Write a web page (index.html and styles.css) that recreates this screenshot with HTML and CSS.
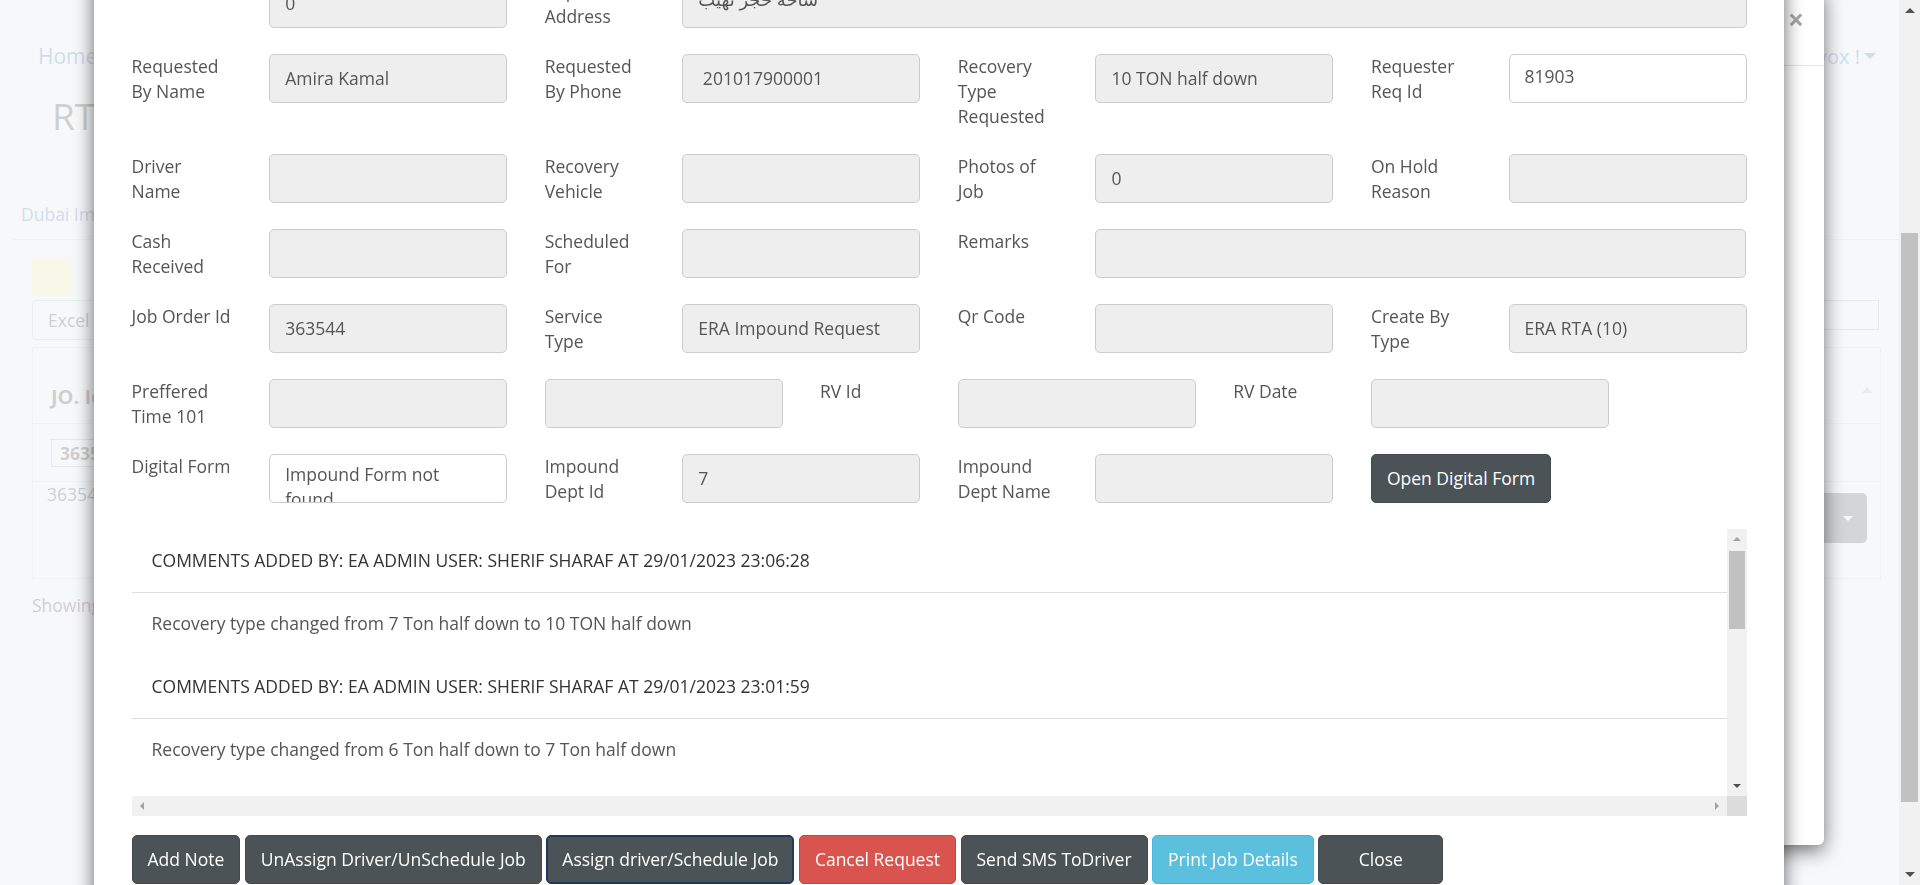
FILE: index.html
```html
<!DOCTYPE html>
<html lang="en">
<head>
<meta charset="utf-8">
<title>RTA Impound Requests</title>
<link rel="stylesheet" href="styles.css">
</head>
<body>
<div class="app">
  <header class="bg-top">
    <a class="bg-crumb">Home</a>
    <span class="bg-user">Welcome Admin Trivox ! <span class="bg-caret"></span></span>
  </header>
  <h1 class="bg-title">RTA Impound Requests</h1>
  <nav class="bg-tabs"><a class="bg-tab">Dubai Impound Yard</a></nav>
  <section class="bg-panel">
    <div class="bg-legend"><span class="bg-swatch"></span><span class="bg-legend-text">Job in progress</span></div>
    <div class="bg-tools">
      <span class="bg-btn">Excel</span>
      <span class="bg-search">Search: <span class="bg-search-box"></span></span>
    </div>
    <table class="bg-table">
      <thead>
        <tr class="bg-head"><th>JO. Id</th><th class="bg-sort-cell"><span class="bg-sort"></span></th></tr>
        <tr class="bg-filter"><td><span class="bg-filter-box">3635</span></td><td></td></tr>
      </thead>
      <tbody>
        <tr class="bg-row"><td>363544</td><td class="bg-act"><span class="bg-drop"><span class="bg-drop-caret"></span></span></td></tr>
      </tbody>
    </table>
    <div class="bg-info">Showing 1 to 1 of 1 entries</div>
  </section>
</div>

<div class="backdrop"></div>

<div class="back-modal">
  <div class="bm-header"><span class="bm-close">&times;</span></div>
</div>

<div class="modal" id="jobModal">
  <div class="modal-dialog">
    <div class="modal-content">
      <div class="modal-header">
        <h4 class="modal-title">Job Order Details</h4>
        <span class="modal-close">&times;</span>
      </div>
      <div class="modal-body">
        <div class="frow">
          <label class="lbl s1">Job Status</label>
          <div class="s2"><input class="ctl" readonly value="Impounded"></div>
          <label class="lbl s1">Plate Number</label>
          <div class="s2"><input class="ctl" readonly value="D 48213"></div>
          <label class="lbl s1">Vehicle Make</label>
          <div class="s2"><input class="ctl" readonly value="Toyota"></div>
          <label class="lbl s1">Vehicle Model</label>
          <div class="s2"><input class="ctl" readonly value="Camry"></div>
        </div>
        <div class="frow">
          <label class="lbl s1">Request Date</label>
          <div class="s2"><input class="ctl" readonly value="29/01/2023 22:41"></div>
          <label class="lbl s1">Pickup Location Address</label>
          <div class="s2"><input class="ctl" readonly value="Al Quoz"></div>
          <label class="lbl s1">Plate Code</label>
          <div class="s2"><input class="ctl" readonly value="D"></div>
          <label class="lbl s1">Plate Source</label>
          <div class="s2"><input class="ctl" readonly value="Dubai"></div>
        </div>
        <div class="frow" id="firstVisibleRow">
          <label class="lbl s1">Amount</label>
          <div class="s2"><input class="ctl" readonly value="0"></div>
          <label class="lbl s1">Impound Address</label>
          <div class="s8"><input class="ctl ctl-ar" readonly value="ساحة حجز نهيب"></div>
        </div>
        <div class="frow">
          <label class="lbl s1">Requested By Name</label>
          <div class="s2"><input class="ctl" readonly value="Amira Kamal"></div>
          <label class="lbl s1">Requested By Phone</label>
          <div class="s2"><input class="ctl" readonly value=" 201017900001"></div>
          <label class="lbl s1">Recovery Type Requested</label>
          <div class="s2"><input class="ctl" readonly value="10 TON half down"></div>
          <label class="lbl s1">Requester Req Id</label>
          <div class="s2"><input class="ctl ctl-num" value="81903"></div>
        </div>
        <div class="frow">
          <label class="lbl s1">Driver Name</label>
          <div class="s2"><input class="ctl" readonly value=""></div>
          <label class="lbl s1">Recovery Vehicle</label>
          <div class="s2"><input class="ctl" readonly value=""></div>
          <label class="lbl s1">Photos of Job</label>
          <div class="s2"><input class="ctl" readonly value="0"></div>
          <label class="lbl s1">On Hold Reason</label>
          <div class="s2"><input class="ctl" readonly value=""></div>
        </div>
        <div class="frow">
          <label class="lbl s1">Cash Received</label>
          <div class="s2"><input class="ctl" readonly value=""></div>
          <label class="lbl s1">Scheduled For</label>
          <div class="s2"><input class="ctl" readonly value=""></div>
          <label class="lbl s1">Remarks</label>
          <div class="s5"><input class="ctl" readonly value=""></div>
        </div>
        <div class="frow">
          <label class="lbl s1">Job Order Id</label>
          <div class="s2"><input class="ctl" readonly value="363544"></div>
          <label class="lbl s1">Service Type</label>
          <div class="s2"><input class="ctl" readonly value="ERA Impound Request"></div>
          <label class="lbl s1">Qr Code</label>
          <div class="s2"><input class="ctl" readonly value=""></div>
          <label class="lbl s1">Create By Type</label>
          <div class="s2"><input class="ctl" readonly value="ERA RTA (10)"></div>
        </div>
        <div class="frow">
          <label class="lbl s1">Preffered Time 101</label>
          <div class="s2"><input class="ctl" readonly value=""></div>
          <div class="s2"><input class="ctl" readonly value=""></div>
          <label class="lbl s1">RV Id</label>
          <div class="s2"><input class="ctl" readonly value=""></div>
          <label class="lbl s1">RV Date</label>
          <div class="s2"><input class="ctl" readonly value=""></div>
        </div>
        <div class="frow">
          <label class="lbl s1">Digital Form</label>
          <div class="s2"><textarea class="ctl ctl-area">Impound Form not found</textarea></div>
          <label class="lbl s1">Impound Dept Id</label>
          <div class="s2"><input class="ctl" readonly value="7"></div>
          <label class="lbl s1">Impound Dept Name</label>
          <div class="s2"><input class="ctl" readonly value=""></div>
          <div class="s2"><button class="btn btn-dark">Open Digital Form</button></div>
        </div>

        <div class="cmt-wrap">
          <div class="comments">
            <div class="cmt-view">
              <div class="cmt">
                <div class="cmt-head">COMMENTS ADDED BY: EA ADMIN USER: SHERIF SHARAF AT 29/01/2023 23:06:28</div>
                <div class="cmt-body">Recovery type changed from 7 Ton half down to 10 TON half down</div>
              </div>
              <div class="cmt">
                <div class="cmt-head">COMMENTS ADDED BY: EA ADMIN USER: SHERIF SHARAF AT 29/01/2023 23:01:59</div>
                <div class="cmt-body">Recovery type changed from 6 Ton half down to 7 Ton half down</div>
              </div>
              <div class="cmt">
                <div class="cmt-head">COMMENTS ADDED BY: EA ADMIN USER: SHERIF SHARAF AT 29/01/2023 22:58:41</div>
                <div class="cmt-body">Recovery type changed from 3 Ton flat bed to 6 Ton half down</div>
              </div>
              <div class="cmt">
                <div class="cmt-head">COMMENTS ADDED BY: EA ADMIN USER: SHERIF SHARAF AT 29/01/2023 22:55:12</div>
                <div class="cmt-body">Service type changed to ERA Impound Request</div>
              </div>
              <div class="cmt">
                <div class="cmt-head">COMMENTS ADDED BY: ERA RTA AT 29/01/2023 22:50:37</div>
                <div class="cmt-body">Impound request received from ERA RTA</div>
              </div>
              <div class="cmt">
                <div class="cmt-head">COMMENTS ADDED BY: ERA RTA AT 29/01/2023 22:49:03</div>
                <div class="cmt-body">Job order created</div>
              </div>
            </div>
            <div class="vbar">
              <span class="sb-btn"><span class="tri tri-up tri-off"></span></span>
              <div class="sb-track"><span class="sb-thumb-v" style="margin-top:2px;height:78px"></span></div>
              <span class="sb-btn"><span class="tri tri-down"></span></span>
            </div>
            <div class="hbar">
              <span class="sb-btn"><span class="tri tri-left tri-off"></span></span>
              <div class="sb-track"></div>
              <span class="sb-btn"><span class="tri tri-right tri-off"></span></span>
            </div>
            <div class="sb-corner"></div>
          </div>
        </div>

        <div class="actions">
          <button class="btn btn-dark">Add Note</button>
          <button class="btn btn-dark">UnAssign Driver/UnSchedule Job</button>
          <button class="btn btn-dark btn-focus">Assign driver/Schedule Job</button>
          <button class="btn btn-red">Cancel Request</button>
          <button class="btn btn-dark">Send SMS ToDriver</button>
          <button class="btn btn-info">Print Job Details</button>
          <button class="btn btn-dark btn-close">Close</button>
        </div>
      </div>
      <div class="modal-footer"></div>
    </div>
  </div>
</div>

<div class="page-bar">
  <span class="sb-btn sb-btn-page"><span class="tri tri-up"></span></span>
  <div class="sb-track"><span class="sb-thumb-v" style="margin-top:212px;height:569px"></span></div>
  <span class="sb-btn sb-btn-page"><span class="tri tri-down"></span></span>
</div>
<script src="app.js"></script>
</body>
</html>
```

FILE: styles.css
```css
* { box-sizing: border-box; }
html, body { margin: 0; height: 100%; }
body {
  font-family: "Open Sans", "DejaVu Sans", sans-serif;
  font-size: 17.5px;
  line-height: 25px;
  color: #333;
  background: #fff;
  overflow: hidden;
}

/* ---------- background page ---------- */
.app { height: 885px; overflow: hidden; }
.bg-top {
  height: 90px;
  padding: 22px 44px 0 38px;
  display: flex;
  align-items: center;
  justify-content: space-between;
}
.bg-crumb { color: #337ab7; font-size: 21px; }
.bg-user { color: #337ab7; font-size: 20px; display: flex; align-items: center; gap: 4px; }
.bg-caret {
  width: 0; height: 0;
  border-left: 6px solid transparent;
  border-right: 6px solid transparent;
  border-top: 6px solid #337ab7;
}
.bg-title {
  margin: 4px 0 0;
  padding-left: 52px;
  font-size: 37px;
  line-height: 44px;
  font-weight: 400;
  color: #333;
}
.bg-tabs {
  margin: 52px 13px 0;
  border-bottom: 1px solid #ddd;
  height: 50px;
}
.bg-tab { display: inline-block; padding: 12px 8px; color: #337ab7; }
.bg-panel { padding: 19px 39px 0 32px; }
.bg-legend { display: flex; align-items: flex-start; gap: 28px; height: 37px; }
.bg-swatch { width: 39px; height: 37px; background: #ffffa0; }
.bg-tools {
  margin-top: 4px;
  display: flex;
  justify-content: space-between;
  align-items: flex-start;
}
.bg-btn {
  height: 40px;
  padding: 0 15px;
  line-height: 38px;
  border: 1px solid #ccc;
  border-radius: 5px;
  color: #333;
}
.bg-search { display: flex; align-items: center; gap: 8px; margin-right: 2px; }
.bg-search-box { width: 190px; height: 30px; border: 1px solid #aaa; }
.bg-table {
  margin-top: 7px;
  width: 100%;
  border-collapse: collapse;
  border: 1px solid #ddd;
}
.bg-table td, .bg-table th { text-align: left; padding: 0 18px; }
.bg-head { height: 76px; border-bottom: 1px solid #ddd; }
.bg-head th { font-size: 20px; font-weight: 700; color: #333; vertical-align: bottom; padding-bottom: 14px; }
.bg-sort-cell { text-align: right !important; vertical-align: middle !important; padding-right: 8px !important; padding-bottom: 0 !important; }
.bg-sort {
  display: inline-block;
  width: 0; height: 0;
  border-left: 5px solid transparent;
  border-right: 5px solid transparent;
  border-bottom: 6px solid #bbb;
}
.bg-filter { height: 58px; border-bottom: 1px solid #ddd; }
.bg-filter-box {
  display: inline-block;
  width: 160px; height: 28px;
  border: 1px solid #aaa;
  padding: 0 8px;
  font-weight: 700;
  line-height: 26px;
}
.bg-row { height: 97px; }
.bg-row td { vertical-align: top; padding-top: 0; padding-left: 14px; }
.bg-act { text-align: right !important; padding-right: 13px !important; padding-top: 11px !important; }
.bg-drop {
  display: inline-flex;
  align-items: center;
  justify-content: flex-end;
  width: 120px; height: 50px;
  padding-right: 14px;
  background: #4b5357;
  border-radius: 5px;
}
.bg-drop-caret {
  width: 0; height: 0;
  border-left: 5px solid transparent;
  border-right: 5px solid transparent;
  border-top: 5px solid #fff;
}
.bg-info { margin-top: 14px; color: #333; }

/* ---------- overlays ---------- */
.backdrop {
  position: fixed;
  inset: 0;
  background: rgba(245, 246, 249, 0.8);
  z-index: 10;
}
.back-modal {
  position: fixed;
  left: 134px;
  top: -12px;
  width: 1690px;
  height: 857px;
  background: #fff;
  border-radius: 6px;
  box-shadow: 0 6px 19px rgba(0, 0, 0, 0.55);
  z-index: 20;
}
.bm-header {
  height: 78px;
  border-bottom: 1px solid #e5e5e5;
  display: flex;
  justify-content: flex-end;
  padding: 18px 20px 0;
}
.bm-close { font-size: 28px; line-height: 26px; font-weight: 700; color: #a6a6a6; }

.modal {
  position: fixed;
  inset: 0;
  overflow-x: hidden;
  overflow-y: scroll;
  z-index: 30;
}
.modal-dialog { width: 1690px; margin: 37.5px 0 37.5px 94px; }
.modal-content {
  background: #fff;
  border-radius: 6px;
  box-shadow: 0 6px 19px rgba(0, 0, 0, 0.6);
}
.modal-header {
  padding: 18.75px;
  border-bottom: 1px solid #e5e5e5;
  display: flex;
  justify-content: space-between;
  align-items: center;
}
.modal-title { margin: 0; font-size: 22.5px; line-height: 31px; font-weight: 600; }
.modal-close { font-size: 28px; font-weight: 700; color: #aaa; }
.modal-body { padding: 18.75px; }
.modal-footer { height: 40px; border-top: 1px solid #e5e5e5; }

/* ---------- form grid ---------- */
.frow {
  display: grid;
  grid-template-columns: repeat(12, minmax(0, 1fr));
  align-items: start;
  margin-bottom: 25px;
}
.frow > * { padding: 0 18.75px; }
.s1 { grid-column: span 1; }
.s2 { grid-column: span 2; }
.s5 { grid-column: span 5; }
.s8 { grid-column: span 8; }
.lbl { color: #555; font-weight: 400; margin: 0; }
.ctl {
  display: block;
  width: 100%;
  height: 49px;
  margin: 0;
  padding: 0 15px;
  font: inherit;
  color: #555;
  background: #fff;
  border: 1px solid #ccc;
  border-radius: 5px;
  outline: none;
}
.ctl[readonly] { background: #eee; }
.ctl-num { padding-bottom: 4px; }
.ctl-ar { padding-bottom: 8px; font-size: 18px; }
.ctl-area {
  padding: 7.5px 15px;
  line-height: 25px;
  resize: none;
  overflow: hidden;
}

/* ---------- comments ---------- */
.cmt-wrap { padding: 0 18.75px; margin-bottom: 18.75px; }
.comments {
  height: 287px;
  display: grid;
  grid-template-columns: minmax(0, 1fr) 20px;
  grid-template-rows: 267px 20px;
}
.cmt-view { overflow: hidden; }
.cmt-head {
  padding: 19px 20px;
  border-bottom: 1px solid #ddd;
  color: #333;
  white-space: nowrap;
}
.cmt-body { padding: 18.5px 20px; color: #555; white-space: nowrap; }

/* scrollbar widgets */
.vbar, .hbar, .page-bar { background: #f1f1f1; display: flex; }
.vbar, .page-bar { flex-direction: column; }
.sb-btn {
  flex: 0 0 20px;
  width: 20px;
  height: 20px;
  display: flex;
  align-items: center;
  justify-content: center;
}
.sb-track { flex: 1; display: flex; flex-direction: column; }
.sb-thumb-v { display: block; margin-left: 2px; margin-right: 2px; background: #c1c1c1; }
.sb-corner { background: #dcdcdc; }
.tri { width: 0; height: 0; }
.tri-up { border-left: 4.5px solid transparent; border-right: 4.5px solid transparent; border-bottom: 4.5px solid #505050; }
.tri-down { border-left: 4.5px solid transparent; border-right: 4.5px solid transparent; border-top: 4.5px solid #505050; }
.tri-left { border-top: 4.5px solid transparent; border-bottom: 4.5px solid transparent; border-right: 4.5px solid #505050; }
.tri-right { border-top: 4.5px solid transparent; border-bottom: 4.5px solid transparent; border-left: 4.5px solid #505050; }
.tri-up.tri-off { border-bottom-color: #a3a3a3; }
.tri-left.tri-off { border-right-color: #a3a3a3; }
.tri-right.tri-off { border-left-color: #a3a3a3; }

.page-bar {
  position: fixed;
  top: 0;
  right: 0;
  width: 21px;
  height: 885px;
  z-index: 40;
}
.sb-btn-page { flex: 0 0 21px; width: 21px; height: 21px; }
.page-bar .tri-up { border-left-width: 5px; border-right-width: 5px; border-bottom-width: 5px; }
.page-bar .tri-down { border-left-width: 5px; border-right-width: 5px; border-top-width: 5px; }

/* ---------- buttons ---------- */
.actions { display: flex; gap: 4.5px; padding: 0 18.75px; }
.btn {
  height: 49px;
  padding: 0 15px;
  font: inherit;
  line-height: 47px;
  color: #fff;
  border: 1px solid transparent;
  border-radius: 5px;
  white-space: nowrap;
  cursor: pointer;
}
.btn-dark { background: #4b5357; border-color: #434a4e; }
.btn-focus { border-color: #1e3a5c; box-shadow: inset 0 0 0 1px #1e3a5c; }
.btn-red { background: #d9534f; border-color: #d43f3a; }
.btn-info { background: #5bc0de; border-color: #46b8da; }
.btn-close { min-width: 125px; }
```

FILE: app.js
```js
(function () {
  var modal = document.getElementById('jobModal');
  var row = document.getElementById('firstVisibleRow');
  var top = row.getBoundingClientRect().top - modal.getBoundingClientRect().top + modal.scrollTop;
  modal.scrollTop = top + 21;
})();
```
